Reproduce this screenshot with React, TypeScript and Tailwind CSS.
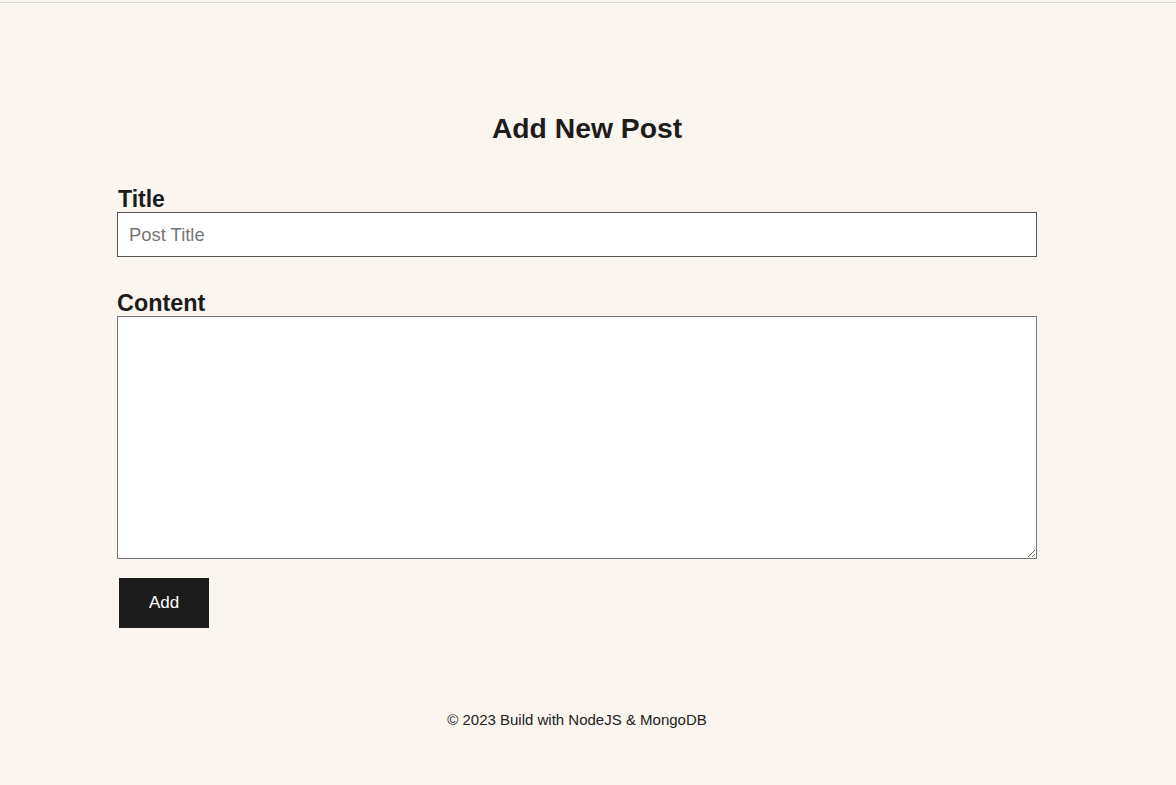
export default function App() {
  return (
    <div className="min-h-[785px] bg-[#faf5ef] pt-[2px] font-['Liberation_Sans',Arial,sans-serif] text-[#1c1c1c]">
      <div className="h-px bg-[#d8d8dd]" />
      <main className="pt-[109px]">
        <h1 className="ml-[-2px] text-center text-[28.3px] font-bold leading-[32px]">Add New Post</h1>
        <form className="ml-[117px] mt-[42px] w-[920px]" onSubmit={(e) => e.preventDefault()}>
          <label htmlFor="title" className="block pl-px text-[23px] font-bold leading-[26px]">
            Title
          </label>
          <input
            id="title"
            type="text"
            placeholder="Post Title"
            className="block h-[45px] w-full border border-[#555] bg-white px-[11px] text-[18.4px] outline-none placeholder:text-[#757575]"
          />
          <label htmlFor="content" className="mt-[33px] block text-[23.4px] font-bold leading-[26px]">
            Content
          </label>
          <textarea
            id="content"
            className="block h-[243px] w-full border border-[#767676] bg-white p-2 outline-none"
          />
          <button
            type="submit"
            className="ml-[2px] mt-[19px] h-[50px] w-[90px] bg-[#1c1c1c] text-[17px] text-white"
          >
            Add
          </button>
        </form>
        <footer className="ml-[117px] mt-[83px] w-[920px] text-center text-[15px] leading-[17px] text-[#222]">
          © 2023 Build with NodeJS &amp; MongoDB
        </footer>
      </main>
    </div>
  )
}
